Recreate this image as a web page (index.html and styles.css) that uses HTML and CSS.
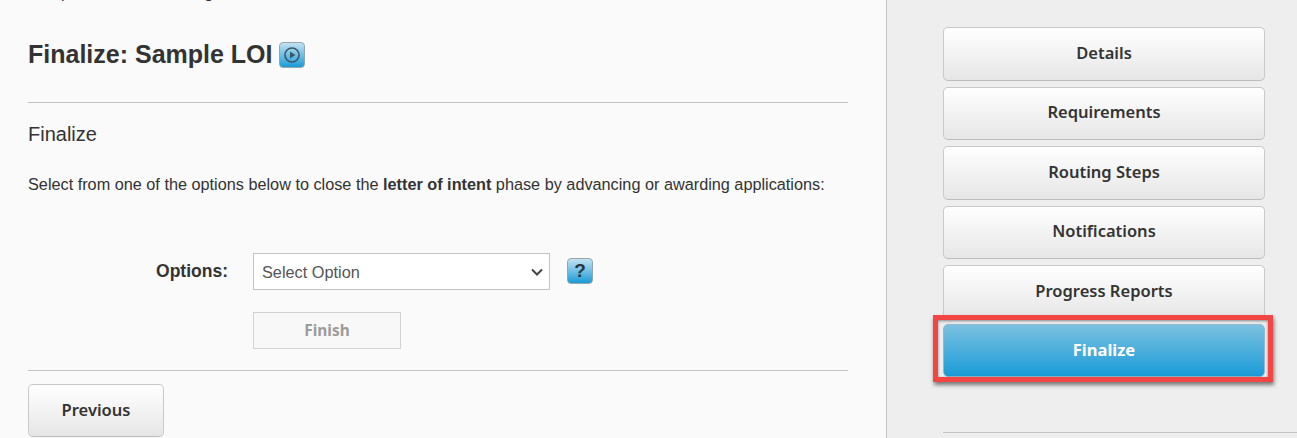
FILE: index.html
```html
<!DOCTYPE html>
<html lang="en">
<head>
    <meta charset="UTF-8">
    <title>Finalize: Sample LOI</title>
    <link rel="stylesheet" href="styles.css">
</head>
<body>
    <div class="layout">
        <main class="content">
            <p class="crumbs">Setup Phases and Settings</p>

            <h1 class="page-title">
                Finalize: Sample LOI
                <span class="icon-btn icon-play">
                    <svg width="18" height="18" viewBox="0 0 18 18">
                        <circle cx="9" cy="9" r="7" fill="none" stroke="#3f5566" stroke-width="1.6"/>
                        <path d="M7 5.5 L12.5 9 L7 12.5 Z" fill="#3f5566"/>
                    </svg>
                </span>
            </h1>

            <hr class="rule">

            <h2 class="section-title">Finalize</h2>
            <p class="intro">Select from one of the options below to close the <b>letter of intent</b> phase by advancing or awarding applications:</p>

            <div class="form-row">
                <label class="form-label" for="options">Options:</label>
                <div class="select-wrap">
                    <select class="form-select" id="options">
                        <option>Select Option</option>
                    </select>
                    <svg class="select-arrow" width="12" height="8" viewBox="0 0 12 8">
                        <path d="M1 1.5 L6 6.5 L11 1.5" fill="none" stroke="#444444" stroke-width="2"/>
                    </svg>
                </div>
                <span class="icon-btn icon-help">?</span>
            </div>

            <button class="finish-btn" disabled>Finish</button>

            <hr class="rule rule-bottom">

            <button class="nav-btn prev-btn">Previous</button>
        </main>

        <aside class="sidebar">
            <button class="nav-btn">Details</button>
            <button class="nav-btn">Requirements</button>
            <button class="nav-btn">Routing Steps</button>
            <button class="nav-btn">Notifications</button>
            <button class="nav-btn">Progress Reports</button>
            <div class="highlight">
                <button class="nav-btn active">Finalize</button>
            </div>
            <hr class="side-rule">
        </aside>
    </div>
</body>
</html>
```

FILE: styles.css
```css
:root {
    --text-color: #333333;
    --rule-color: #c4c4c4;
    --blue-top: #7cc1e0;
    --blue-bottom: #1a9bd7;
}

html, body {
    height: 438px;
    overflow: hidden;
}

body {
    margin: 0;
    font-family: "Liberation Sans", Arial, sans-serif;
    color: var(--text-color);
    background: #fafafa;
}

.layout {
    display: flex;
    height: 438px;
}

.content {
    width: 820px;
    padding: 0 38px 0 28px;
    flex-shrink: 0;
}

.crumbs {
    margin: -16px 0 0;
    height: 18px;
    font-size: 16px;
    line-height: 18px;
}

.page-title {
    display: flex;
    align-items: center;
    gap: 6px;
    margin: 37px 0 0;
    font-size: 25px;
    line-height: 30px;
    font-weight: bold;
}

.icon-btn {
    display: flex;
    align-items: center;
    justify-content: center;
    box-sizing: border-box;
    width: 26px;
    height: 26px;
    border: 1px solid #9aa5ab;
    border-radius: 4px;
    background: linear-gradient(#c2e3f2, #1a9bd7);
}

.icon-play {
    margin-top: 2px;
}

.rule {
    margin: 33px 0 0;
    border: 0;
    border-top: 1px solid var(--rule-color);
}

.section-title {
    margin: 19px 0 0;
    font-size: 20px;
    line-height: 24px;
    font-weight: normal;
}

.intro {
    margin: 28px 0 0;
    font-size: 16.25px;
    line-height: 20px;
}

.form-row {
    display: flex;
    align-items: center;
    margin-top: 59px;
}

.form-label {
    width: 225px;
    padding-right: 25px;
    box-sizing: border-box;
    text-align: right;
    font-size: 17.5px;
    font-weight: bold;
}

.select-wrap {
    position: relative;
    width: 297px;
    height: 37px;
}

.form-select {
    appearance: none;
    box-sizing: border-box;
    width: 100%;
    height: 37px;
    padding: 0 4px 0 8px;
    border: 1px solid var(--rule-color);
    border-radius: 0;
    background: #ffffff;
    color: #555555;
    font-family: "Liberation Sans", Arial, sans-serif;
    font-size: 16.3px;
}

.select-arrow {
    position: absolute;
    top: 15px;
    right: 7px;
}

.icon-help {
    margin-left: 17px;
    margin-top: -2px;
    color: #2a343c;
    font-size: 19px;
    font-weight: bold;
}

.finish-btn {
    display: block;
    box-sizing: border-box;
    width: 148px;
    height: 37px;
    margin: 22px 0 0 225px;
    border: 1px solid #d2d2d2;
    background: #f8f8f8;
    color: #9b9b9b;
    font-family: "Noto Sans", sans-serif;
    font-size: 15.4px;
    font-weight: bold;
}

.rule-bottom {
    margin-top: 21px;
}

.nav-btn {
    display: block;
    box-sizing: border-box;
    width: 322px;
    height: 53.5px;
    margin-bottom: 6px;
    padding-bottom: 4px;
    border: 1px solid #c9c9c9;
    border-bottom-color: #bcbcbc;
    border-radius: 5px;
    background: linear-gradient(#ffffff, #e6e6e6);
    color: var(--text-color);
    font-family: "Noto Sans", sans-serif;
    font-size: 16.5px;
    font-weight: 600;
}

.prev-btn {
    width: 136px;
    height: 53px;
    margin-top: 13px;
}

.sidebar {
    flex: 1;
    padding: 27px 0 0 56px;
    border-left: 1px solid var(--rule-color);
    background: #eeeeee;
}

.highlight {
    width: 322px;
    height: 53px;
    position: relative;
    margin-top: -1px;
}

/* red callout box drawn over the active button */
.highlight::after {
    content: "";
    position: absolute;
    top: -9px;
    right: -8px;
    bottom: -5px;
    left: -10px;
    border: 5px solid #f44545;
    box-shadow: 1px 3px 4px rgba(0, 0, 0, 0.5), inset 0 1px 3px rgba(0, 0, 0, 0.45);
    pointer-events: none;
}

.highlight .active {
    margin: 0;
    height: 53px;
    padding-bottom: 2px;
    border: 1px solid #8fb9cd;
    background: linear-gradient(var(--blue-top), var(--blue-bottom));
    color: #ffffff;
    font-weight: 700;
}

.side-rule {
    margin: 55px 0 0;
    border: 0;
    border-top: 1px solid var(--rule-color);
}
```
